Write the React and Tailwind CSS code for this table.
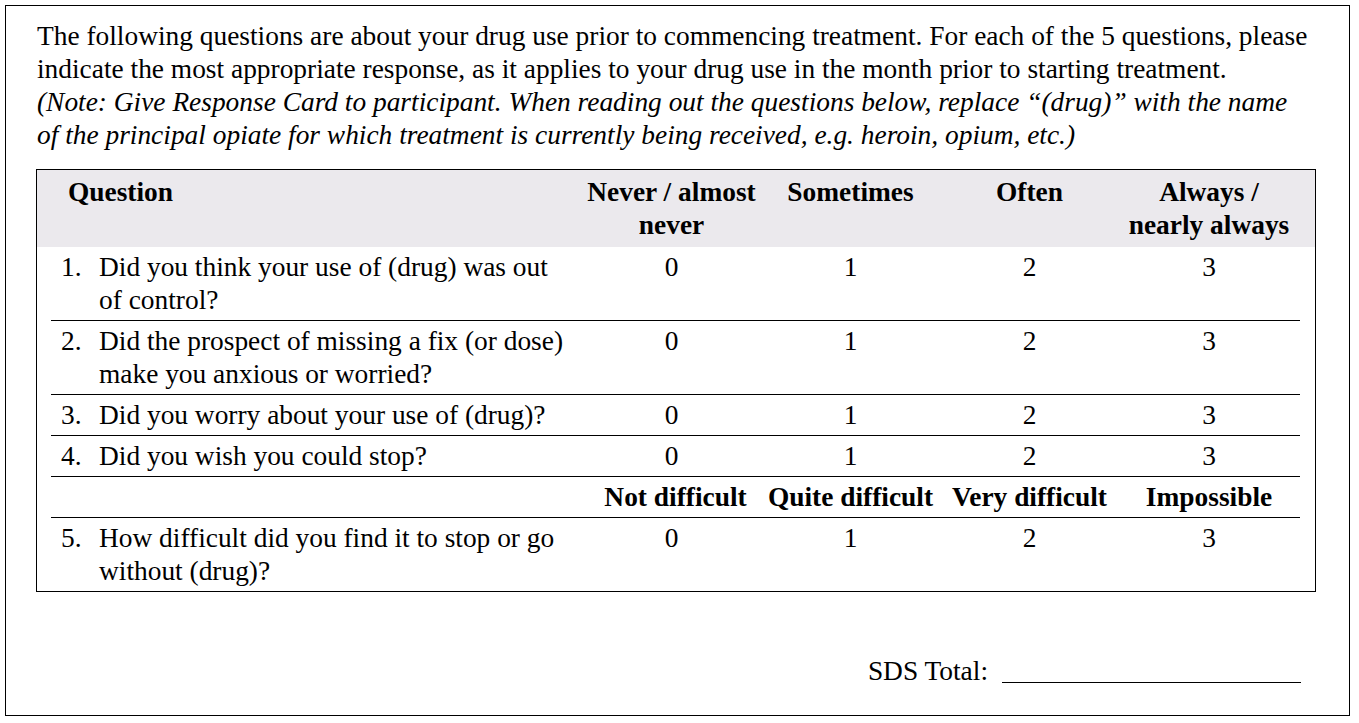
import React from 'react'

const serif = { fontFamily: '"Liberation Serif", "Times New Roman", serif' }

const questions = [
  { n: '1.', text: ['Did you think your use of (drug) was out', 'of control?'] },
  { n: '2.', text: ['Did the prospect of missing a fix (or dose)', 'make you anxious or worried?'] },
  { n: '3.', text: ['Did you worry about your use of (drug)?'] },
  { n: '4.', text: ['Did you wish you could stop?'] },
]

const cols = 'grid grid-cols-[531px_179px_179px_179px_180px]'

const Scores = () => (
  <>
    <div className="text-center">0</div>
    <div className="text-center">1</div>
    <div className="text-center">2</div>
    <div className="text-center">3</div>
  </>
)

const QuestionRow = ({ q, last }) => (
  <div className={`${cols} pt-[4px] pb-[3px] ${last ? '' : 'border-b border-black'}`}>
    <div className="flex">
      <div className="w-[48px] pl-[10px] shrink-0">{q.n}</div>
      <div className="whitespace-nowrap">
        {q.text.map((t, i) => (
          <div key={i}>{t}</div>
        ))}
      </div>
    </div>
    <Scores />
  </div>
)

export default function App() {
  return (
    <div className="bg-white w-[1359px] h-[723px] pt-[5px] pl-[5px]" style={serif}>
      <div className="w-[1345px] h-[711px] border border-black px-[30px] pt-[14px] text-[27.4px] leading-[33px] text-black">
        <p className="pl-[1px] whitespace-nowrap">
          The following questions are about your drug use prior to commencing treatment. For each of the 5 questions, please
          <br />
          indicate the most appropriate response, as it applies to your drug use in the month prior to starting treatment.
          <br />
          <span className="italic">
            (Note: Give Response Card to participant. When reading out the questions below, replace “(drug)” with the name
            <br />
            of the principal opiate for which treatment is currently being received, e.g. heroin, opium, etc.)
          </span>
        </p>

        <div className="mt-[17px] w-[1280px] border border-black">
          {/* header */}
          <div className="bg-[#ebe9ed] pl-[14px] pr-[15px] pt-[6px] pb-[5px] font-bold">
            <div className={cols}>
              <div className="pl-[17px]">Question</div>
              <div className="text-center">Never / almost<br />never</div>
              <div className="text-center">Sometimes</div>
              <div className="text-center">Often</div>
              <div className="text-center">Always /<br />nearly always</div>
            </div>
          </div>

          {/* body */}
          <div className="ml-[14px] mr-[15px]">
            {questions.map(q => (
              <QuestionRow key={q.n} q={q} />
            ))}
            <div className={`${cols} pt-[4px] pb-[3px] border-b border-black font-bold whitespace-nowrap`}>
              <div></div>
              <div className="text-center pl-[8px]">Not difficult</div>
              <div className="text-center">Quite difficult</div>
              <div className="text-center">Very difficult</div>
              <div className="text-center">Impossible</div>
            </div>
            <QuestionRow
              q={{ n: '5.', text: ['How difficult did you find it to stop or go', 'without (drug)?'] }}
              last
            />
          </div>
        </div>

        <div className="mt-[63px] flex justify-end pr-[18px]">
          <div>SDS Total:</div>
          <div className="ml-[14px] w-[299px] h-[28px] border-b border-black"></div>
        </div>
      </div>
    </div>
  )
}
